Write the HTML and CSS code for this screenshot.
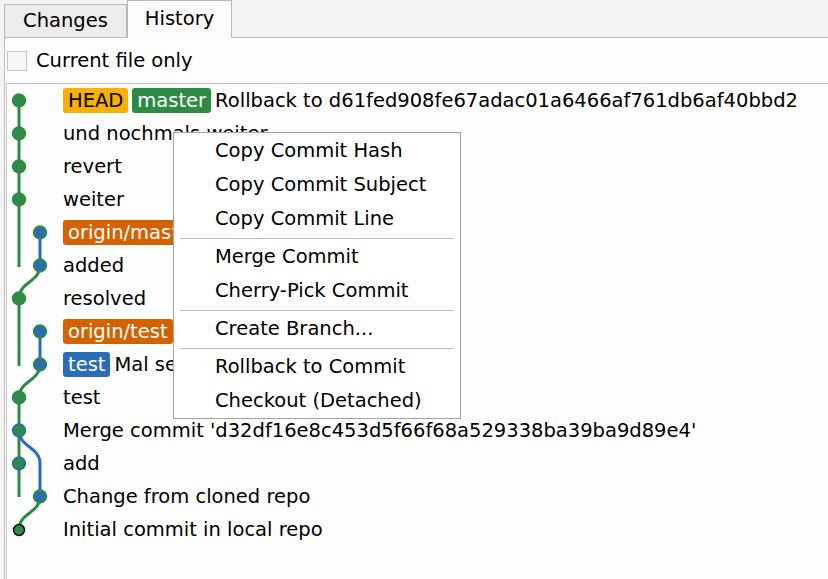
FILE: index.html
```html
<!DOCTYPE html>
<html>
<head>
<meta charset="utf-8">
<link rel="stylesheet" href="styles.css">
</head>
<body>
<div class="tabbar">
  <div class="tab">Changes</div>
  <div class="tab active">History</div>
</div>
<div class="panel">
  <div class="filter"><span class="checkbox"></span><span>Current file only</span></div>
  <div class="list">
    <svg class="graph" width="55" height="462" viewBox="0 0 55 462">
      <g fill="none" stroke-width="3">
        <path d="M12 16.5 V183" stroke="#2e8b46"/>
        <path d="M33 148.5 V181.5" stroke="#2b6cb6"/>
        <path d="M33 181.5 C33 198 12 198 12 214.5" stroke="#2e8b46"/>
        <path d="M12 214.5 V282" stroke="#2e8b46"/>
        <path d="M33 247.5 V280.5" stroke="#2b6cb6"/>
        <path d="M33 280.5 C33 297 12 297 12 313.5" stroke="#2e8b46"/>
        <path d="M12 313.5 V413" stroke="#2e8b46"/>
        <path d="M12 346.5 C12 363 33 363 33 379.5 V412.5" stroke="#2b6cb6"/>
        <path d="M33 412.5 C33 429 12 429 12 445.5" stroke="#2e8b46"/>
      </g>
      <g>
        <circle cx="12" cy="16.5" r="7.2" fill="#2e8b46"/>
        <circle cx="12" cy="49.5" r="7.2" fill="#2e8b46"/>
        <circle cx="12" cy="82.5" r="7.2" fill="#2e8b46"/>
        <circle cx="12" cy="115.5" r="7.2" fill="#2e8b46"/>
        <circle cx="33" cy="148.5" r="6.2" fill="#2b6cb6" stroke="#2e8b46" stroke-width="2"/>
        <circle cx="33" cy="181.5" r="6.2" fill="#2b6cb6" stroke="#2e8b46" stroke-width="2"/>
        <circle cx="12" cy="214.5" r="7.2" fill="#2e8b46"/>
        <circle cx="33" cy="247.5" r="6.2" fill="#2b6cb6" stroke="#2e8b46" stroke-width="2"/>
        <circle cx="33" cy="280.5" r="6.2" fill="#2b6cb6" stroke="#2e8b46" stroke-width="2"/>
        <circle cx="12" cy="313.5" r="7.2" fill="#2e8b46"/>
        <circle cx="12" cy="346.5" r="6.2" fill="#2e8b46" stroke="#2b6cb6" stroke-width="2"/>
        <circle cx="12" cy="379.5" r="6.2" fill="#2e8b46" stroke="#2b6cb6" stroke-width="2"/>
        <circle cx="33" cy="412.5" r="6.2" fill="#2b6cb6" stroke="#2e8b46" stroke-width="2"/>
        <circle cx="12" cy="446" r="5.5" fill="#2e8b46" stroke="#111" stroke-width="1.5"/>
      </g>
    </svg>
    <div class="rows">
      <div class="row"><span class="ref head">HEAD</span><span class="ref local">master</span><span>Rollback to d61fed908fe67adac01a6466af761db6af40bbd2</span></div>
      <div class="row">und nochmals weiter</div>
      <div class="row">revert</div>
      <div class="row">weiter</div>
      <div class="row"><span class="ref remote">origin/master</span></div>
      <div class="row">added</div>
      <div class="row">resolved</div>
      <div class="row"><span class="ref remote">origin/test</span></div>
      <div class="row"><span class="ref tag">test</span><span>Mal sehen</span></div>
      <div class="row">test</div>
      <div class="row">Merge commit 'd32df16e8c453d5f66f68a529338ba39ba9d89e4'</div>
      <div class="row">add</div>
      <div class="row">Change from cloned repo</div>
      <div class="row">Initial commit in local repo</div>
    </div>
  </div>
</div>
<div class="menu">
  <div class="item">Copy Commit Hash</div>
  <div class="item">Copy Commit Subject</div>
  <div class="item">Copy Commit Line</div>
  <div class="sep"></div>
  <div class="item">Merge Commit</div>
  <div class="item">Cherry-Pick Commit</div>
  <div class="sep"></div>
  <div class="item">Create Branch...</div>
  <div class="sep"></div>
  <div class="item">Rollback to Commit</div>
  <div class="item">Checkout (Detached)</div>
</div>
</body>
</html>
```
FILE: styles.css
```css
html, body {
  margin: 0;
  padding: 0;
}
body {
  width: 828px;
  height: 579px;
  overflow: hidden;
  position: relative;
  background: #f4f4f4;
  font-family: "DejaVu Sans", sans-serif;
  font-size: 19.5px;
  color: #000;
}
.tabbar {
  display: flex;
  align-items: flex-end;
  height: 37px;
  padding-left: 4px;
}
.tab {
  box-sizing: border-box;
  width: 123px;
  height: 33px;
  line-height: 31px;
  text-align: center;
  background: #ececec;
  border: 1px solid #b9b9b9;
  border-bottom: none;
}
.tab.active {
  width: 105px;
  height: 38px;
  line-height: 36px;
  margin-bottom: -1px;
  background: #fbfbfb;
  position: relative;
  z-index: 1;
}
.panel {
  box-sizing: border-box;
  margin-left: 4px;
  height: 542px;
  border-top: 1px solid #b9b9b9;
  border-left: 1px solid #c0c0c0;
  background: #fdfdfd;
  display: flex;
  flex-direction: column;
}
.filter {
  height: 45px;
  display: flex;
  align-items: center;
  padding-left: 2px;
}
.checkbox {
  box-sizing: border-box;
  width: 20px;
  height: 20px;
  border: 1px solid #c6c6c6;
  background: #f7f7f7;
  margin-right: 9px;
}
.list {
  flex: 1;
  margin-left: 1px;
  border-top: 1px solid #c2c2c2;
  border-left: 1px solid #c8c8c8;
  background: #fdfdfd;
  display: flex;
  align-items: flex-start;
}
.graph {
  display: block;
  flex: none;
}
.rows {
  display: flex;
  flex-direction: column;
  padding-left: 1px;
}
.row {
  height: 33px;
  display: flex;
  align-items: center;
  white-space: nowrap;
}
.ref {
  line-height: 25px;
  padding: 0 5px;
  border-radius: 3px;
  margin-right: 4px;
  color: #fff;
}
.ref.head {
  background: #f7b000;
  color: #000;
}
.ref.local {
  background: #2e8b46;
}
.ref.remote {
  background: #d56200;
}
.ref.tag {
  background: #2b6cb6;
}
.menu {
  position: absolute;
  left: 173px;
  top: 132px;
  width: 288px;
  box-sizing: border-box;
  border: 1px solid #a3a3a3;
  background: #fff;
  padding: 1px 0 0;
}
.item {
  height: 34px;
  line-height: 34px;
  padding-left: 41px;
  white-space: nowrap;
}
.sep {
  height: 1px;
  margin: 1.5px 6px;
  background: #bdbdbd;
}
```
